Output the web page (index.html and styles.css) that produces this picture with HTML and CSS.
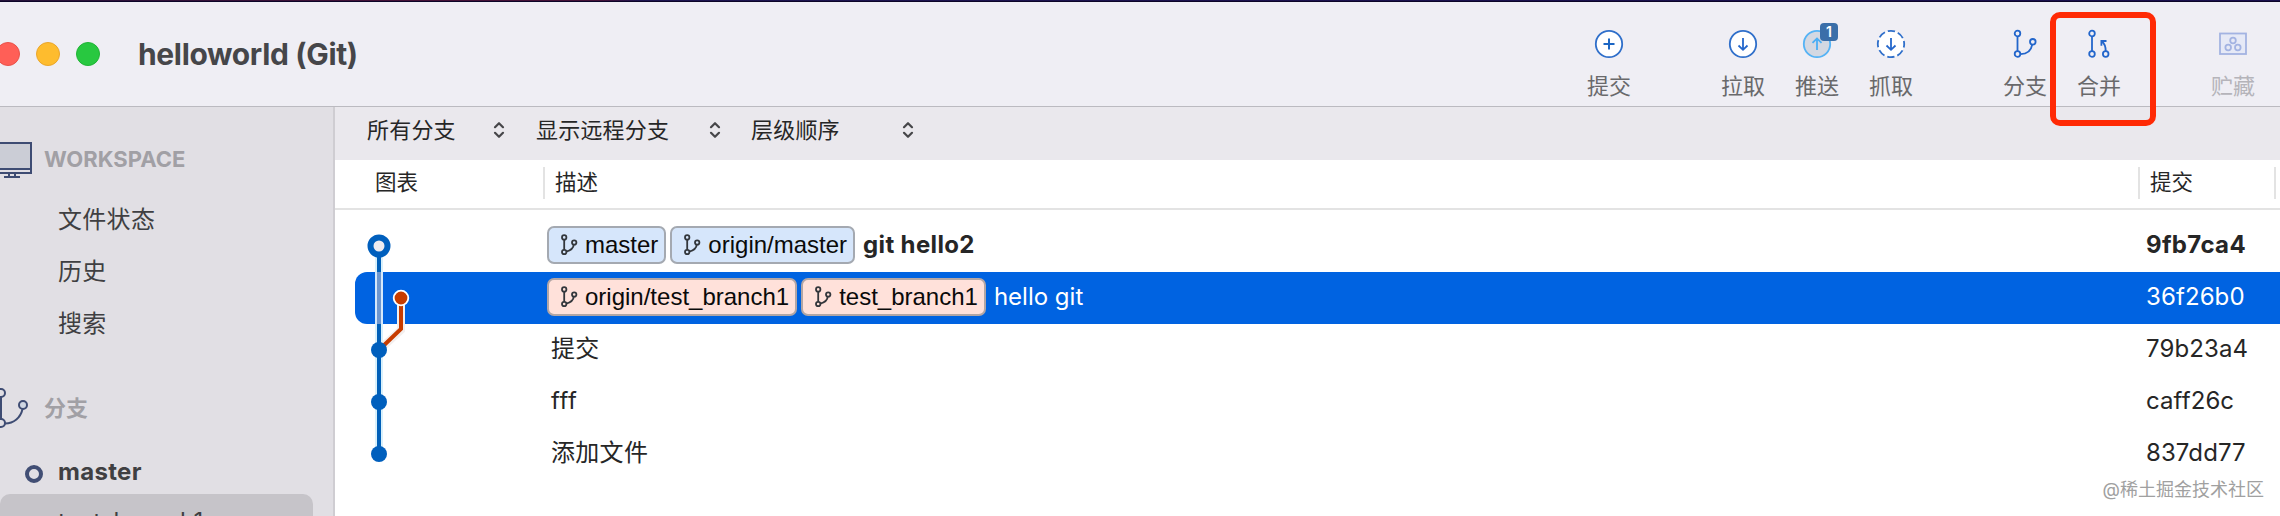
FILE: index.html
```html
<!DOCTYPE html>
<html lang="zh-CN">
<head>
<meta charset="utf-8">
<title>helloworld (Git)</title>
<link rel="stylesheet" href="styles.css">
</head>
<body>
<svg class="defs" width="0" height="0" aria-hidden="true">
  <symbol id="branch" viewBox="0 0 24 30">
    <g fill="none" stroke="currentColor" stroke-width="1.8">
      <circle cx="4.5" cy="4.5" r="2.8"/><circle cx="4.5" cy="25" r="2.8"/><circle cx="19.8" cy="12.8" r="2.8"/>
      <path d="M4.5 7.5V22M7.5 25.2C15 25 18.3 21 19.2 15.6"/>
    </g>
  </symbol>
  <symbol id="tag-branch" viewBox="0 0 18 22">
    <g fill="none" stroke="currentColor" stroke-width="1.8">
      <circle cx="4.2" cy="3.4" r="2.2"/><circle cx="4.2" cy="18" r="2.2"/><circle cx="14.2" cy="8.5" r="2.2"/>
      <path d="M4.2 5.6V15.8M6.2 17.6C10.5 16.6 13.4 14.2 13.8 10.7"/>
    </g>
  </symbol>
  <symbol id="updown" viewBox="0 0 12 18">
    <path d="M2 6.2L6 2.2L10 6.2M2 11.8L6 15.8L10 11.8" fill="none" stroke="#464649" stroke-width="2.2" stroke-linecap="round" stroke-linejoin="round"/>
  </symbol>
</svg>
<div class="window">
  <div class="desktop-edge"></div>
  <header class="titlebar">
    <div class="lights"><i class="light red"></i><i class="light yellow"></i><i class="light green"></i></div>
    <h1 class="title">helloworld (Git)</h1>
    <nav class="toolbar">
      <div class="tool commit">
        <svg width="30" height="30" viewBox="0 0 30 30"><circle cx="15" cy="15" r="13.2" fill="#fff" stroke="#2f6fca" stroke-width="1.8"/><path d="M15 9.5V20.5M9.5 15H20.5" stroke="#1c66c4" stroke-width="2" fill="none"/></svg>
        <span>提交</span>
      </div>
      <div class="tool">
        <svg width="30" height="30" viewBox="0 0 30 30"><circle cx="15" cy="15" r="13.2" fill="#fff" stroke="#2f6fca" stroke-width="1.8"/><path d="M15 9V20.5M10.5 16.5L15 20.8L19.5 16.5" stroke="#2366cb" stroke-width="1.8" fill="none"/></svg>
        <span>拉取</span>
      </div>
      <div class="tool">
        <svg width="30" height="30" viewBox="0 0 30 30"><circle cx="15" cy="15" r="13.2" fill="#d3d8e2" stroke="#55b3f5" stroke-width="1.8"/><path d="M15 21V9.5M10.5 13.8L15 9.4L19.5 13.8" stroke="#4aaef5" stroke-width="1.8" fill="none"/></svg>
        <b class="badge">1</b>
        <span>推送</span>
      </div>
      <div class="tool fetch">
        <svg width="30" height="30" viewBox="0 0 30 30"><circle cx="15" cy="15" r="13.2" fill="#fff" stroke="#2f6fca" stroke-width="1.8" stroke-dasharray="7.37 3" stroke-dashoffset="3.7"/><path d="M15 9V20.5M10.5 16.5L15 20.8L19.5 16.5" stroke="#2366cb" stroke-width="1.8" fill="none"/></svg>
        <span>抓取</span>
      </div>
      <div class="tool">
        <svg class="blue" width="24" height="30"><use href="#branch"/></svg>
        <span>分支</span>
      </div>
      <div class="tool merge">
        <svg class="blue" width="24" height="30" viewBox="0 0 24 30"><g fill="none" stroke="currentColor" stroke-width="1.8"><circle cx="5" cy="4.5" r="2.8"/><circle cx="5" cy="25" r="2.8"/><circle cx="18.7" cy="25" r="2.8"/><path d="M5 7.5V22M18.7 22C18.7 17.5 17.5 14.5 14.8 12.3M14.4 16.8V12H19.5"/></g></svg>
        <span>合并</span>
      </div>
      <div class="tool stash">
        <svg width="30" height="30" viewBox="0 0 30 30"><g fill="none" stroke="#a3b3e2" stroke-width="1.8"><rect x="2" y="4.5" width="26" height="20.5" fill="#e6e9f6"/><circle cx="15" cy="11.5" r="2.8"/><circle cx="10.2" cy="18.5" r="2.8"/><circle cx="19.8" cy="18.5" r="2.8"/></g></svg>
        <span>贮藏</span>
      </div>
    </nav>
    <div class="highlight"></div>
  </header>
  <div class="body">
    <aside class="sidebar">
      <div class="group">
        <svg class="group-icon" width="33" height="40" viewBox="0 0 33 40"><path d="M-5 4H31V30H-5Z" fill="#cbcdd6"/><path d="M-5 4H31V34H-5M-5 30H31" fill="none" stroke="#3e4c73" stroke-width="2"/><path d="M9 35V38M15 35V38M4 38H20" fill="none" stroke="#3e4c73" stroke-width="2"/></svg>
        <span class="caps">WORKSPACE</span>
      </div>
      <div class="item">文件状态</div>
      <div class="item">历史</div>
      <div class="item">搜索</div>
      <div class="group branches">
        <svg class="group-icon" width="33" height="44" viewBox="0 0 33 44"><g fill="none" stroke="#3e4c73" stroke-width="2"><circle cx="1" cy="7" r="4"/><circle cx="1" cy="37" r="4"/><circle cx="23" cy="19" r="4" fill="#cfd6e2"/><path d="M1 11V33M5 37.5C14 37.5 20.5 31.5 22.5 23.2"/></g></svg>
        <span>分支</span>
      </div>
      <div class="item current"><i class="ring"></i>master</div>
      <div class="item selected">test_branch1</div>
    </aside>
    <main class="main">
      <div class="filters">
        <div class="filter all">所有分支<svg width="12" height="18"><use href="#updown"/></svg></div>
        <div class="filter remote">显示远程分支<svg width="12" height="18"><use href="#updown"/></svg></div>
        <div class="filter order">层级顺序<svg width="12" height="18"><use href="#updown"/></svg></div>
      </div>
      <div class="columns">
        <span class="col graph-col">图表</span>
        <span class="col desc-col">描述</span>
        <span class="col hash-col">提交</span>
      </div>
      <div class="log">
        <div class="row head">
          <div class="desc">
            <span class="tag"><svg width="18" height="22"><use href="#tag-branch"/></svg>master</span>
            <span class="tag"><svg width="18" height="22"><use href="#tag-branch"/></svg>origin/master</span>
            <span class="msg">git hello2</span>
          </div>
          <div class="hash">9fb7ca4</div>
        </div>
        <div class="row active">
          <div class="desc">
            <span class="tag pink"><svg width="18" height="22"><use href="#tag-branch"/></svg>origin/test_branch1</span>
            <span class="tag pink"><svg width="18" height="22"><use href="#tag-branch"/></svg>test_branch1</span>
            <span class="msg">hello git</span>
          </div>
          <div class="hash">36f26b0</div>
        </div>
        <div class="row"><div class="desc plain">提交</div><div class="hash">79b23a4</div></div>
        <div class="row"><div class="desc plain latin">fff</div><div class="hash">caff26c</div></div>
        <div class="row"><div class="desc plain">添加文件</div><div class="hash">837dd77</div></div>
        <svg class="graph" width="80" height="260" viewBox="0 0 80 260">
          <path d="M24 26V234" stroke="#d8f0fb" stroke-width="8"/>
          <path d="M24 26V234" stroke="#005fb8" stroke-width="4"/>
          <path d="M24 52V104" stroke="#d5e8fb" stroke-width="8"/>
          <path d="M24 52V104" stroke="#6e97cf" stroke-width="4"/>
          <path d="M46 78V110L24 130" fill="none" stroke="#f3efee" stroke-width="8"/>
          <path d="M46 78V109L24 130" fill="none" stroke="#c73c00" stroke-width="4"/>
          <path d="M24 104V130" stroke="#005fb8" stroke-width="4"/>
          <circle cx="46" cy="78" r="7.3" fill="#c73c00" stroke="#fff" stroke-width="1.8"/>
          <circle cx="24" cy="26" r="8.5" fill="#eeecf0" stroke="#005fbd" stroke-width="6"/>
          <g fill="#005fbd"><circle cx="24" cy="130" r="8"/><circle cx="24" cy="182" r="8"/><circle cx="24" cy="234" r="8"/></g>
        </svg>
      </div>
    </main>
  </div>
  <div class="watermark">@稀土掘金技术社区</div>
</div>
</body>
</html>
```
FILE: styles.css
```css
* { box-sizing: border-box; }
html, body { margin: 0; height: 100%; overflow: hidden; }
body { font-family: Inter, "Noto Sans CJK SC", sans-serif; font-size: 24px; color: #262626; background: #fff; }
svg { display: block; flex: none; }
.defs { position: absolute; }

.window { position: relative; width: 2280px; height: 516px; display: flex; flex-direction: column; overflow: hidden; }
.desktop-edge { flex: none; height: 2px; background: linear-gradient(90deg, #24123a 0, #451237 400px, #451237 600px, #1d1550 640px, #190f4c 100%); border-bottom: 1px solid #0c0428; }

.titlebar { position: relative; flex: none; height: 105px; display: flex; background: #efeef4; border-bottom: 1px solid #bbbac0; }
.lights { display: flex; gap: 16px; margin: 40px 0 0 -4px; }
.light { width: 24px; height: 24px; border-radius: 50%; }
.red { background: #ff5f57; border: 1px solid #e9524a; }
.yellow { background: #febc2e; border: 1px solid #eaa62b; }
.green { background: #28c840; border: 1px solid #20b435; }
.title { margin: 32px 0 0 38px; font-size: 30px; line-height: 40px; font-weight: 700; color: #464649; letter-spacing: -0.35px; }
.toolbar { display: flex; margin-left: auto; padding: 27px 10px 0 0; }
.tool { position: relative; width: 74px; display: flex; flex-direction: column; align-items: center; font-size: 22px; line-height: 30px; color: #69696b; }
.tool span { margin-top: 12px; }
.commit { margin-right: 60px; }
.fetch { margin-right: 60px; }
.merge { margin-right: 60px; }
.blue { color: #2366cb; }
.stash { color: #b5b4ba; }
.badge { position: absolute; top: -6px; left: 40px; width: 18px; height: 18px; border-radius: 4px; background: #3b6fa9; color: #fff; font-size: 14px; line-height: 18px; text-align: center; font-weight: 600; }
.highlight { position: absolute; z-index: 3; left: 2050px; top: 10px; width: 106px; height: 114px; border: 6px solid #ff2a05; border-radius: 10px; }

.body { flex: 1; min-height: 0; display: flex; }
.sidebar { flex: none; width: 335px; background: #e1dfe4; border-right: 2px solid #cfcdd2; overflow: hidden; padding-top: 26px; color: #3f3f42; }
.group { height: 52px; display: flex; align-items: center; font-size: 22px; font-weight: 700; color: #a1a0a5; margin-bottom: 8px; }
.group-icon { margin-right: 11px; }
.item { height: 52px; line-height: 54px; padding-left: 58px; letter-spacing: 0.3px; }
.branches { margin-top: 33px; }
.branches span { font-weight: 600; padding-bottom: 4px; }
.current { font-weight: 700; display: flex; padding: 3px 0 0 25px; }
.ring { width: 18px; height: 18px; border: 4px solid #414e74; border-radius: 50%; margin: 20px 15px 0 0; }
.selected { width: 313px; background: #c6c4c9; border-radius: 10px; border-bottom-left-radius: 0; padding-top: 1px; }

.main { flex: 1; min-width: 0; }
.filters { height: 53px; background: #eae8ed; display: flex; align-items: center; padding: 0 0 11px 32px; font-size: 22px; letter-spacing: 0.2px; }
.filter { display: flex; align-items: center; justify-content: space-between; height: 30px; }
.filter svg { margin-top: 4px; }
.all { width: 138px; margin-right: 31px; }
.remote { width: 185px; margin-right: 30px; }
.order { width: 163px; }
.columns { height: 50px; border-bottom: 2px solid #e3e3e3; display: flex; align-items: center; padding-bottom: 3px; font-size: 21.5px; }
.col { height: 32px; line-height: 30px; border-right: 2px solid #e3e3e3; }
.graph-col { width: 210px; padding-left: 40px; }
.desc-col { width: 1595px; padding-left: 10px; }
.hash-col { width: 136px; padding-left: 10px; }
.log { position: relative; margin: 10px 0 0 20px; }
.row { height: 52px; display: flex; align-items: center; padding-bottom: 3px; }
.desc { width: 1772px; padding-left: 192px; display: flex; align-items: center; gap: 4px; }
.plain { padding: 0 0 4px 196px; letter-spacing: 0.3px; }
.latin { padding-bottom: 0; letter-spacing: 0.6px; }
.hash { margin-left: 19px; letter-spacing: 0.1px; }
.head .msg, .head .hash { font-weight: 700; letter-spacing: 0.35px; }
.active { background: #0063e1; color: #fff; border-radius: 12px 0 0 12px; }
.tag { height: 38px; display: flex; align-items: center; gap: 7px; padding: 0 6px 0 11px; border: 2px solid #a4a9b1; border-radius: 7px; background: #d6e6fb; color: #0a0a0a; font-family: "Liberation Sans", Arial, sans-serif; }
.tag svg { color: #33373c; }
.pink { background: #ffe1da; border-color: #b3a6a5; }
.msg { margin-left: 4px; }
.graph { position: absolute; left: 0; top: 0; }

.watermark { position: absolute; right: 16px; bottom: 13px; font-size: 18px; line-height: 26px; color: #a0a0a0; }
```
